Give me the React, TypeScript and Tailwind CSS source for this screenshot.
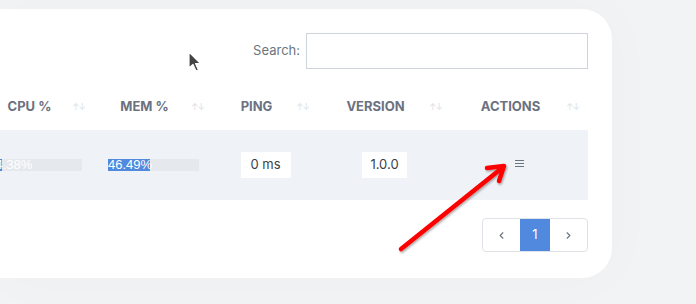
import { ChevronLeft, ChevronRight } from "lucide-react";

const cols = [
  { label: "CPU %" },
  { label: "MEM %" },
  { label: "PING" },
  { label: "VERSION" },
  { label: "ACTIONS" },
];

function SortArrows() {
  return (
    <span className="absolute right-[8px] top-[12px] flex text-[9px] leading-none text-[#dcdfe4]">
      <span>↑</span>
      <span className="-ml-[1px]">↓</span>
    </span>
  );
}

function Bar({ value, label, width }: { value: number; label: string; width: string }) {
  return (
    <div className={`relative h-[12px] bg-[#e5e9ee] ${width}`}>
      <div className="absolute inset-y-0 left-0 bg-[#5089de]" style={{ width: `${value}%` }} />
      <span className="absolute left-0 top-[-2px] text-[13px] leading-[16px] text-white [font-family:'Liberation_Sans',Arial,sans-serif]">
        {label}
      </span>
    </div>
  );
}

export default function App() {
  return (
    <div className="relative h-[304px] w-[696px] overflow-hidden bg-[#f2f3f5] [font-family:Inter,'Noto_Sans',sans-serif]">
      <div className="pt-[9px]">
        <div className="relative h-[269px] w-[612px] overflow-hidden rounded-r-[30px] bg-white shadow-[0_0_60px_rgba(0,0,0,0.025)]">
          {/* search */}
          <div className="flex items-center justify-end pr-[24px] pt-[24px]">
            <label className="mr-[6px] text-[13px] text-[#6c757d]">Search:</label>
            <input className="h-[36px] w-[282px] border border-[#ced4da] bg-white outline-none" />
          </div>

          {/* table */}
          <div className="ml-[-17px] mt-[21px] w-[605px]">
            <div className="grid h-[40px] grid-cols-[111px_119px_105px_133px_137px]">
              {cols.map((c) => (
                <div key={c.label} className="relative pr-[18px] pt-[3px] text-center">
                  <span className="text-[13px] font-bold text-[#6b717f]">{c.label}</span>
                  <SortArrows />
                </div>
              ))}
            </div>
            <div className="grid h-[70px] grid-cols-[111px_119px_105px_133px_137px] items-center bg-[#eff2f6]">
              <div className="flex justify-center">
                <Bar value={7} label="4.38%" width="w-[86px]" />
              </div>
              <div className="flex justify-center">
                <Bar value={46.49} label="46.49%" width="w-[91px]" />
              </div>
              <div className="flex justify-center">
                <span className="flex h-[26px] w-[50px] items-center justify-center bg-white text-[13px] text-[#3a3f4a]">
                  0 ms
                </span>
              </div>
              <div className="flex justify-center">
                <span className="flex h-[26px] w-[45px] items-center justify-center bg-white text-[13px] text-[#3a3f4a]">
                  1.0.0
                </span>
              </div>
              <div className="flex justify-center pb-[3px]">
                <svg width="9" height="7" viewBox="0 0 9 7">
                  <path d="M0 0.5h9M0 3.5h9M0 6.5h9" stroke="#6c757d" strokeWidth="1" />
                </svg>
              </div>
            </div>
          </div>

          {/* pagination */}
          <div className="mr-[24px] mt-[18px] flex justify-end">
            <div className="flex h-[34px] overflow-hidden rounded-[4px] border border-[#dee2e6]">
              <button className="flex w-[37px] items-center justify-center text-[#6c757d]">
                <ChevronLeft size={11} strokeWidth={2.5} />
              </button>
              <button className="flex w-[30px] items-center justify-center bg-[#5089de] text-[13px] text-white">
                1
              </button>
              <button className="flex w-[37px] items-center justify-center text-[#6c757d]">
                <ChevronRight size={11} strokeWidth={2.5} />
              </button>
            </div>
          </div>
        </div>
      </div>

      {/* mouse cursor */}
      <svg className="absolute left-[187px] top-[50px]" width="16" height="24" viewBox="0 0 16 24">
        <path d="M2 2 L2 18 L6 14.5 L9 21 L11.5 20 L8.5 13.5 L13.5 13.5 Z" fill="#444" stroke="#fff" strokeWidth="1.2" strokeLinejoin="round" />
      </svg>

      {/* red arrow */}
      <svg className="absolute left-0 top-0" width="696" height="304" viewBox="0 0 696 304">
        <defs>
          <filter id="sh" x="-20%" y="-20%" width="140%" height="140%">
            <feDropShadow dx="1" dy="1.5" stdDeviation="1.2" floodColor="#000" floodOpacity="0.35" />
          </filter>
        </defs>
        <g filter="url(#sh)" stroke="#ff0000" strokeWidth="4.5" strokeLinecap="round" strokeLinejoin="round" fill="none">
          <path d="M401 249 L502 168" />
          <path d="M487 168 L504 166 L499 181" />
        </g>
      </svg>
    </div>
  );
}
